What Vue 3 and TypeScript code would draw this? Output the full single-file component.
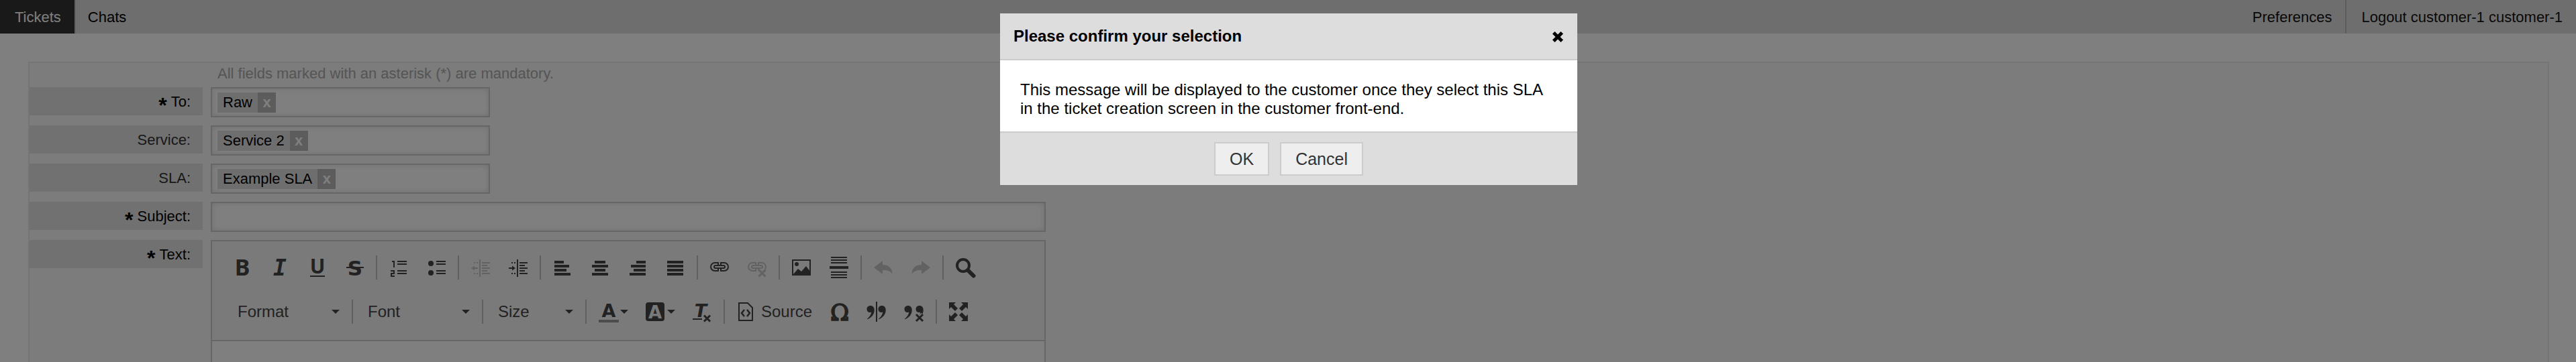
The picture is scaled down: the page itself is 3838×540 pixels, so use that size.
<script setup lang="ts">
import { ref } from 'vue'

interface SelectField {
  id: string
  label: string
  value: string
  required: boolean
}

interface Tool {
  name: string
  title: string
  disabled?: boolean
  menu?: boolean
  text?: string
}

const selectFields: SelectField[] = [
  { id: 'dest', label: 'To:', value: 'Raw', required: true },
  { id: 'service', label: 'Service:', value: 'Service 2', required: false },
  { id: 'sla', label: 'SLA:', value: 'Example SLA', required: false },
]

const subject = ref('')
const dialogOpen = ref(true)

const topGroups: Tool[][] = [
  [
    { name: 'bold', title: 'Bold' },
    { name: 'italic', title: 'Italic' },
    { name: 'underline', title: 'Underline' },
    { name: 'strike', title: 'Strikethrough' },
  ],
  [
    { name: 'numbered', title: 'Numbered list' },
    { name: 'bulleted', title: 'Bulleted list' },
  ],
  [
    { name: 'outdent', title: 'Decrease indent', disabled: true },
    { name: 'indent', title: 'Increase indent' },
  ],
  [
    { name: 'left', title: 'Align left' },
    { name: 'center', title: 'Center' },
    { name: 'right', title: 'Align right' },
    { name: 'justify', title: 'Justify' },
  ],
  [
    { name: 'link', title: 'Link' },
    { name: 'unlink', title: 'Unlink', disabled: true },
  ],
  [
    { name: 'image', title: 'Image' },
    { name: 'rule', title: 'Horizontal line' },
  ],
  [
    { name: 'undo', title: 'Undo', disabled: true },
    { name: 'redo', title: 'Redo', disabled: true },
  ],
  [{ name: 'find', title: 'Find' }],
]

const combos = [
  { label: 'Format', size: 'wide' },
  { label: 'Font', size: 'wide' },
  { label: 'Size', size: 'narrow' },
]

const bottomGroups: Tool[][] = [
  [
    { name: 'color', title: 'Text color', menu: true },
    { name: 'background', title: 'Background color', menu: true },
    { name: 'clear', title: 'Remove format' },
  ],
  [
    { name: 'source', title: 'Source', text: 'Source' },
    { name: 'omega', title: 'Special character' },
    { name: 'splitquote', title: 'Split quote' },
    { name: 'removequote', title: 'Remove quote' },
  ],
  [{ name: 'maximize', title: 'Maximize' }],
]

const chain =
  '<path d="M14 12V9H9a6 6 0 0 0 0 12h5v-3M18 12V9h5a6 6 0 0 1 0 12h-5v-3" fill="none" stroke="currentColor" stroke-width="2"/><rect x="8" y="13" width="16" height="4" rx="2" fill="none" stroke="currentColor" stroke-width="2"/>'
const indentLines =
  '<path d="M15 4v26" stroke="currentColor" stroke-width="2"/><path d="M18 9h12M18 13h8M18 17h12M18 21h8M18 25h12M6 9h2M10 9h2M6 25h2M10 25h2" stroke="currentColor" stroke-width="2"/>'
const quoteMark =
  'M6 8c-3.500 0-5.500 2.200-5.500 5.200S2.500 18 5 18c1.200 0 1.800-.3 2.300-.5C7 21 4 25.500 1 27.500v.8C7 26.500 11.700 21 11.700 14.500 11.700 10.500 9.500 8 6 8z'

const icons: Record<string, string> = {
  bold: '<text class="noto" x="17" y="28" font-size="34" text-anchor="middle">B</text>',
  italic: '<text class="mono" x="17" y="28" font-size="33" text-anchor="middle">I</text>',
  underline:
    '<text class="noto" x="17" y="25" font-size="30" text-anchor="middle">U</text><path d="M6 28h22v2H6z"/>',
  strike:
    '<text class="dejavu" x="17" y="28" font-size="31" text-anchor="middle">S</text><path d="M4 15h26v2H4z"/>',
  numbered:
    '<path d="M14 6h14v2H14zM14 10h14v2H14zM14 20h14v2H14zM14 24h14v2H14z"/><path d="M6 7h3v9M4 21h5v4H5v4h5" fill="none" stroke="currentColor" stroke-width="2"/>',
  bulleted:
    '<path d="M16 6h14v2H16zM16 10h14v2H16zM16 20h14v2H16zM16 24h14v2H16z"/><circle cx="8" cy="10" r="4"/><circle cx="8" cy="24" r="4"/>',
  outdent: indentLines + '<path d="M2 17l5-3.500V16h5v2H7v2.500z"/>',
  indent: indentLines + '<path d="M12 17l-5-3.500V16H2v2h5v2.500z"/>',
  left: '<path d="M4 6h14v4H4zM4 12h22v4H4zM4 18h18v4H4zM4 24h24v4H4z"/>',
  center: '<path d="M8 6h16v4H8zM4 12h24v4H4zM8 18h16v4H8zM4 24h24v4H4z"/>',
  right: '<path d="M14 6h14v4H14zM6 12h22v4H6zM10 18h18v4H10zM4 24h24v4H4z"/>',
  justify: '<path d="M4 6h24v4H4zM4 12h24v4H4zM4 18h24v4H4zM4 24h24v4H4z"/>',
  link: chain,
  unlink:
    chain +
    '<path d="M18.500 19.500l10 10M28.500 19.500l-10 10" stroke="#f3f3f3" stroke-width="6"/><path d="M18.500 19.500l10 10M28.500 19.500l-10 10" stroke="currentColor" stroke-width="3"/>',
  image:
    '<path d="M3 5h26v22H3z" fill="none" stroke="currentColor" stroke-width="2"/><circle cx="9" cy="11" r="3"/><path d="M4 26l7-8 5 4 7-8 6 8v4z"/>',
  rule: '<path d="M4 0h24v2H4zM4 4h24v2H4zM4 8h24v2H4zM2 14h28v4H2zM4 22h24v2H4zM4 26h24v2H4zM4 30h24v2H4z"/>',
  undo: '<path d="M2 16L15 6v6c9 0 14.500 5 14.500 14-3-5-7-6-14.500-6v6z"/>',
  redo: '<path d="M30 16L17 6v6C8 12 2.500 17 2.500 26c3-5 7-6 14.500-6v6z"/>',
  find: '<circle cx="13" cy="13" r="9" fill="none" stroke="currentColor" stroke-width="4"/><path d="M20 20l8.500 8.500" stroke="currentColor" stroke-width="6" stroke-linecap="round"/>',
  color:
    '<text class="dejavu" x="17" y="24" font-size="27" text-anchor="middle">A</text><path d="M2 28h30v4H2z" fill="#999"/>',
  background:
    '<rect x="2" y="2" width="28" height="28" rx="4"/><text class="dejavu" x="16" y="26" font-size="26" text-anchor="middle" fill="#f3f3f3">A</text>',
  clear:
    '<text class="oblique" x="14" y="24" font-size="27" text-anchor="middle">T</text><path d="M2 26h14v2H2z"/><path d="M19 21.500l9 9M28 21.500l-9 9" stroke="currentColor" stroke-width="3"/>',
  source:
    '<path d="M5 3h13l7 7v19H5z" fill="none" stroke="currentColor" stroke-width="2"/><path d="M13 13l-4 5 4 5M17 13l4 5-4 5" fill="none" stroke="currentColor" stroke-width="2.500"/>',
  omega:
    '<text class="serif" x="17" y="29" font-size="34" text-anchor="middle" stroke="currentColor" stroke-width="1.500">Ω</text>',
  splitquote:
    '<path d="' + quoteMark + '" transform="translate(1 -1)"/><path d="' + quoteMark +
    '" transform="translate(18 -1)"/><path d="M15 1h2v30h-2z"/>',
  removequote:
    '<path d="' + quoteMark + '" transform="translate(1 -1)"/><path d="' + quoteMark +
    '" transform="translate(18 -1)"/><path d="M18.500 19.500l10 10M28.500 19.500l-10 10" stroke="#f3f3f3" stroke-width="5"/><path d="M19 20l10 10M29 20l-10 10" stroke="currentColor" stroke-width="3"/>',
  maximize:
    '<path d="M2 2h10L9 5l6 6-4 4-6-6-3 3zM30 2v10l-3-3-6 6-4-4 6-6-3-3zM2 30V20l3 3 6-6 4 4-6 6 3 3zM30 30H20l3-3-6-6 4-4 6 6 3-3z"/>',
}
</script>

<template>
  <div class="page">
    <header class="topbar">
      <nav class="nav">
        <a class="nav-item active" href="#tickets">Tickets</a>
        <a class="nav-item" href="#chats">Chats</a>
      </nav>
      <nav class="nav">
        <a class="nav-item account" href="#preferences">Preferences</a>
        <a class="nav-item account divided" href="#logout">Logout customer-1 customer-1</a>
      </nav>
    </header>

    <main class="panel">
      <p class="hint">All fields marked with an asterisk (*) are mandatory.</p>

      <div v-for="field in selectFields" :key="field.id" class="row">
        <label class="label" :class="{ required: field.required }" :for="field.id">
          <span v-if="field.required" class="star">*</span>{{ field.label }}
        </label>
        <div class="field picker">
          <span class="chip">
            <span class="chip-text">{{ field.value }}</span>
            <button type="button" class="chip-remove" :aria-label="'Remove ' + field.value">x</button>
          </span>
          <input :id="field.id" class="picker-input" type="text" />
        </div>
      </div>

      <div class="row">
        <label class="label required" for="subject"><span class="star">*</span>Subject:</label>
        <input id="subject" v-model="subject" class="field subject" type="text" />
      </div>

      <div class="row grow">
        <label class="label required" for="body"><span class="star">*</span>Text:</label>
        <div class="editor">
          <div class="toolbar">
            <div class="tools">
              <div v-for="(group, i) in topGroups" :key="i" class="group">
                <button
                  v-for="tool in group"
                  :key="tool.name"
                  type="button"
                  class="tool"
                  :disabled="tool.disabled"
                  :aria-label="tool.title"
                >
                  <svg class="icon" viewBox="0 0 32 32" v-html="icons[tool.name]"></svg>
                </button>
              </div>
            </div>
            <div class="tools second">
              <div v-for="combo in combos" :key="combo.label" class="group">
                <button type="button" class="combo" :class="combo.size">
                  {{ combo.label }}<span class="caret"></span>
                </button>
              </div>
              <div v-for="(group, i) in bottomGroups" :key="i" class="group">
                <button
                  v-for="tool in group"
                  :key="tool.name"
                  type="button"
                  class="tool"
                  :aria-label="tool.title"
                >
                  <svg class="icon" viewBox="0 0 32 32" v-html="icons[tool.name]"></svg>
                  <span v-if="tool.menu" class="caret menu"></span>
                  <span v-if="tool.text" class="tool-text">{{ tool.text }}</span>
                </button>
              </div>
            </div>
          </div>
          <textarea id="body" class="editor-body"></textarea>
        </div>
      </div>
    </main>

    <div v-if="dialogOpen" class="overlay">
      <section class="dialog" role="dialog" aria-modal="true" aria-labelledby="dialog-title">
        <header class="dialog-head">
          <h1 id="dialog-title" class="dialog-title">Please confirm your selection</h1>
          <button type="button" class="close" aria-label="Close" @click="dialogOpen = false">
            <svg class="close-icon" viewBox="0 0 18 18">
              <path d="M4.500 4.500l9 9M13.500 4.500l-9 9" stroke="currentColor" stroke-width="5" stroke-linecap="square" />
            </svg>
          </button>
        </header>
        <p class="dialog-body">
          This message will be displayed to the customer once they select this SLA in the ticket
          creation screen in the customer front-end.
        </p>
        <footer class="dialog-foot">
          <button type="button" class="btn" @click="dialogOpen = false">OK</button>
          <button type="button" class="btn" @click="dialogOpen = false">Cancel</button>
        </footer>
      </section>
    </div>
  </div>
</template>

<style>
body {
  margin: 0;
  background: #fff;
}
.icon text {
  font-weight: 700;
}
.icon .noto {
  font-family: 'Noto Sans', sans-serif;
}
.icon .mono {
  font-family: 'DejaVu Sans Mono', monospace;
  font-style: italic;
}
.icon .dejavu {
  font-family: 'DejaVu Sans', sans-serif;
}
.icon .oblique {
  font-family: 'DejaVu Sans', sans-serif;
  font-style: italic;
}
.icon .serif {
  font-family: 'DejaVu Serif', serif;
  font-weight: 400;
}
</style>

<style scoped>
.page {
  display: flex;
  flex-direction: column;
  height: 100vh;
  overflow: hidden;
  font-family: 'Liberation Sans', Arial, sans-serif;
  font-size: 22px;
  color: #000;
}
.page * {
  box-sizing: border-box;
}
button,
input,
textarea {
  margin: 0;
  padding: 0;
  border: 0;
  background: none;
  font: inherit;
  color: inherit;
  outline: none;
}

.topbar {
  display: flex;
  justify-content: space-between;
  flex: none;
  height: 50px;
  background: #ddd;
}
.nav {
  display: flex;
}
.nav-item {
  padding: 2px 20px 0 18px;
  line-height: 48px;
  color: #000;
  text-decoration: none;
}
.nav-item.active {
  padding: 2px 20px 0 22px;
  background: #333;
  color: #fff;
  border-right: 2px solid #c4c4c4;
}
.nav-item.account {
  color: #111;
}
.nav-item.divided {
  padding-left: 22px;
  border-left: 2px solid #bbb;
}

.panel {
  display: flex;
  flex: 1;
  flex-direction: column;
  gap: 12px;
  min-height: 0;
  margin: 42px 40px 0 42px;
  border: 2px solid #eaeaea;
  border-bottom: 0;
  background: #f8f8f8;
}
.hint {
  margin: 0 0 -8px;
  padding-left: 280px;
  line-height: 32px;
  color: #aaa;
}
.row {
  display: flex;
  align-items: flex-start;
  gap: 12px;
}
.row.grow {
  flex: 1;
  min-height: 0;
}
.label {
  display: block;
  flex: none;
  width: 258px;
  height: 42px;
  padding: 2px 18px 0 0;
  background: #e2e2e2;
  color: #333;
  line-height: 40px;
  text-align: right;
  white-space: nowrap;
}
.label.required {
  color: #000;
}
.star {
  margin-right: 6px;
  font-size: 32px;
  font-weight: 700;
  line-height: 0;
  vertical-align: -9px;
}
.field {
  height: 45px;
  border: 2px solid #ccc;
  background: #fff;
  box-shadow: inset 0 0 8px #ddd;
}
.picker {
  display: flex;
  width: 416px;
  padding: 6px 8px;
}
.chip {
  display: flex;
  flex: none;
  height: 30px;
  background: #ddd;
  line-height: 30px;
}
.chip-text {
  padding: 0 8px;
}
.chip-remove {
  width: 27px;
  background: #b8b8b8;
  color: #fff;
  font-weight: 700;
  line-height: 30px;
}
.picker-input {
  flex: 1;
  min-width: 0;
}
.subject {
  flex: 0 1 1244px;
  padding: 0 8px;
}

.editor {
  display: flex;
  flex: 0 1 1244px;
  flex-direction: column;
  height: 100%;
  border: 2px solid #ccc;
  border-bottom: 0;
  background: #fff;
}
.toolbar {
  flex: none;
  padding: 6px 16px 9px;
  border-bottom: 2px solid #ccc;
  background: #f4f4f4;
  color: #444;
}
.tools {
  display: flex;
  height: 66px;
}
.tools.second {
  padding-left: 4px;
}
.group {
  display: flex;
  align-items: center;
}
.group + .group::before {
  content: '';
  width: 2px;
  height: 36px;
  margin: 0 4px;
  background: #c0c0c0;
}
.tool {
  display: flex;
  align-items: center;
  height: 56px;
  padding: 0 12px;
}
.tool:disabled {
  color: #c4c4c4;
}
.icon {
  display: block;
  flex: none;
  width: 32px;
  height: 32px;
  overflow: visible;
  fill: currentColor;
}
.tool-text {
  margin-left: 6px;
  font-size: 24px;
}
.combo {
  display: flex;
  align-items: center;
  justify-content: space-between;
  height: 56px;
  padding: 0 14px 0 18px;
  font-size: 24px;
}
.combo.wide {
  width: 184px;
}
.combo.narrow {
  width: 144px;
}
.caret {
  border: 6px solid transparent;
  border-top-color: currentColor;
  border-bottom: 0;
}
.caret.menu {
  margin-left: 2px;
}
.editor-body {
  flex: 1;
  min-height: 0;
  padding: 20px;
  resize: none;
}

.overlay {
  position: fixed;
  inset: 0;
  display: flex;
  align-items: flex-start;
  justify-content: center;
  padding: 20px 0 0 2px;
  background: rgba(0, 0, 0, 0.5);
}
.dialog {
  width: 860px;
  background: #fff;
}
.dialog-head {
  display: flex;
  align-items: center;
  justify-content: space-between;
  height: 70px;
  padding: 0 20px;
  border-bottom: 2px solid #ccc;
  background: #ddd;
}
.dialog-title {
  margin: 0;
  font-size: 24px;
  font-weight: 700;
  line-height: 28px;
}
.close {
  padding-top: 2px;
}
.close-icon {
  display: block;
  width: 18px;
  height: 18px;
}
.dialog-body {
  margin: 0;
  padding: 30px 30px 20px;
  font-size: 24px;
  line-height: 28px;
}
.dialog-foot {
  display: flex;
  justify-content: center;
  gap: 16px;
  padding: 14px;
  border-top: 2px solid #ccc;
  background: #ddd;
}
.btn {
  height: 50px;
  padding: 0 21px;
  border: 2px solid #ccc;
  background: #eee;
  color: #333;
  font-size: 25px;
}
</style>
